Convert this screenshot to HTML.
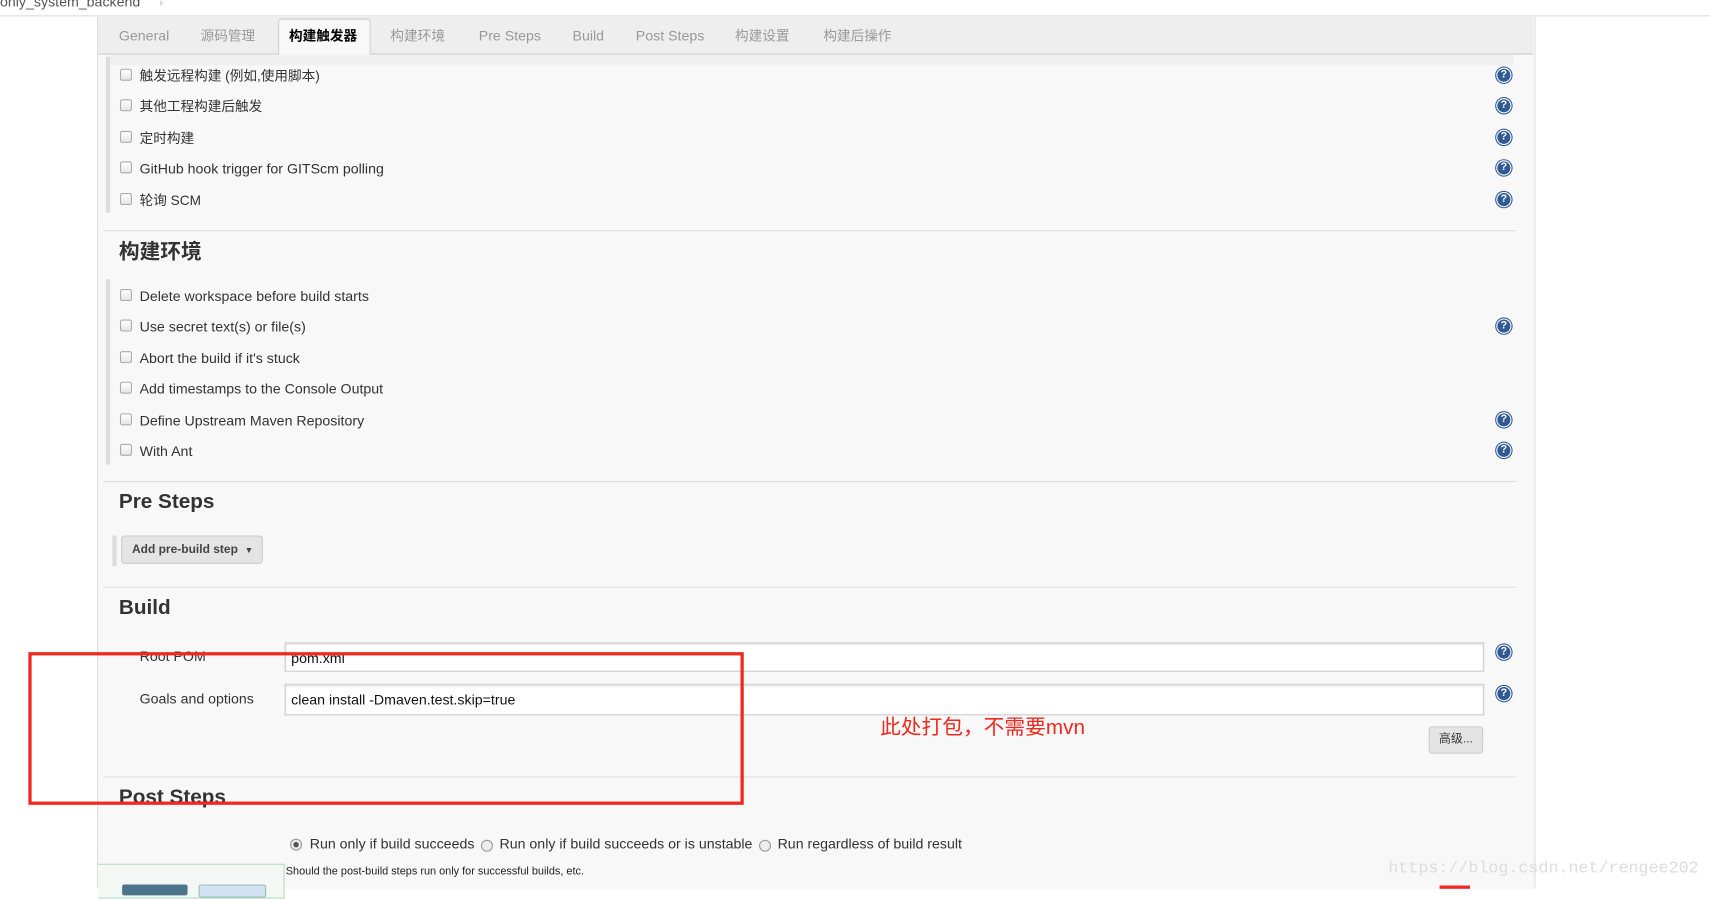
<!DOCTYPE html>
<html><head><meta charset="utf-8"><style>
html,body{margin:0;padding:0;width:1710px;height:889px;overflow:hidden;background:#fff}
#w{position:absolute;left:0;top:0;width:1568px;height:815px;transform:scale(1.09056);transform-origin:0 0;font-family:"Liberation Sans","Noto Sans CJK SC",sans-serif;color:#333}
.a{position:absolute;white-space:nowrap;line-height:16px}
.t{font-size:13px}
.cj{font-size:12.5px}
.cb{position:absolute;width:9px;height:9px;border:1px solid #aaa;border-radius:2px;background:linear-gradient(#fff,#e6e6e6)}
.h{position:absolute;width:12px;height:12px;border-radius:50%;background:#2f5a95;border:1px solid #fff;box-shadow:0 0 0 1px #2f5a95;color:#fff;font:bold 10px/12px "Liberation Sans",sans-serif;text-align:center}
.hr{position:absolute;left:95px;width:1295px;height:1px;background:#ddd}
.hd{position:absolute;font-weight:bold;font-size:19px;color:#333;line-height:22px}
.tab{position:absolute;top:25px;font-size:13px;color:#999;line-height:16px}
.tab.c{top:25px;font-size:12.5px}
.inp{position:absolute;left:261px;width:1100px;height:27px;background:#fff;border:1px solid #ccc;box-shadow:inset 0 1px 2px #ddd;font-size:13px;line-height:27px;padding-left:5px;box-sizing:border-box;color:#111}
.rd{position:absolute;width:9px;height:9px;border-radius:50%;border:1px solid #999;background:#eee}
</style></head><body><div id="w">
<div class="a t" style="left:0;top:-6px;color:#555">only_system_backend</div>
<div class="a" style="left:146px;top:-4px;color:#aaa;font-size:10px">›</div>
<div class="a" style="left:0;top:14px;width:1568px;height:1px;background:#ddd"></div>
<div class="a" style="left:89px;top:15px;width:1317px;height:800px;background:#f8f8f8;border-left:1px solid #ddd;border-right:1px solid #ddd"></div>
<div class="a" style="left:90px;top:15px;width:1316px;height:34px;background:#eee;border-bottom:1px solid #ccc"></div>
<div class="a" style="left:255px;top:17px;width:83px;height:33px;background:#f8f8f8;border:1px solid #ccc;border-bottom:none;border-radius:3px 3px 0 0"></div>
<div class="tab" style="left:109px">General</div>
<div class="tab c" style="left:184px">源码管理</div>
<div class="tab c" style="left:265px;color:#000;font-weight:bold">构建触发器</div>
<div class="tab c" style="left:358px">构建环境</div>
<div class="tab" style="left:439px">Pre Steps</div>
<div class="tab" style="left:525px">Build</div>
<div class="tab" style="left:583px">Post Steps</div>
<div class="tab c" style="left:674px">构建设置</div>
<div class="tab c" style="left:755px">构建后操作</div>
<div class="a" style="left:97px;top:52px;width:4px;height:143px;background:#ddd"></div>
<div class="a" style="left:101px;top:50px;width:1287px;height:10px;background:#f0f0f0"></div>

<div class="cb" style="left:110px;top:63px"></div><div class="a t cj" style="left:128px;top:62px">触发远程构建 (例如,使用脚本)</div><div class="h" style="left:1372px;top:62px">?</div>
<div class="cb" style="left:110px;top:91px"></div><div class="a t cj" style="left:128px;top:90px">其他工程构建后触发</div><div class="h" style="left:1372px;top:90px">?</div>
<div class="cb" style="left:110px;top:120px"></div><div class="a t cj" style="left:128px;top:119px">定时构建</div><div class="h" style="left:1372px;top:119px">?</div>
<div class="cb" style="left:110px;top:148px"></div><div class="a t" style="left:128px;top:147px">GitHub hook trigger for GITScm polling</div><div class="h" style="left:1372px;top:147px">?</div>
<div class="cb" style="left:110px;top:177px"></div><div class="a t cj" style="left:128px;top:176px">轮询 SCM</div><div class="h" style="left:1372px;top:176px">?</div>
<div class="hr" style="top:211px"></div>
<div class="hd" style="left:109px;top:221px">构建环境</div>
<div class="a" style="left:97px;top:256px;width:4px;height:170px;background:#ddd"></div>
<div class="cb" style="left:110px;top:265px"></div><div class="a t" style="left:128px;top:264px">Delete workspace before build starts</div>
<div class="cb" style="left:110px;top:293px"></div><div class="a t" style="left:128px;top:292px">Use secret text(s) or file(s)</div><div class="h" style="left:1372px;top:292px">?</div>
<div class="cb" style="left:110px;top:322px"></div><div class="a t" style="left:128px;top:321px">Abort the build if it's stuck</div>
<div class="cb" style="left:110px;top:350px"></div><div class="a t" style="left:128px;top:349px">Add timestamps to the Console Output</div>
<div class="cb" style="left:110px;top:379px"></div><div class="a t" style="left:128px;top:378px">Define Upstream Maven Repository</div><div class="h" style="left:1372px;top:378px">?</div>
<div class="cb" style="left:110px;top:407px"></div><div class="a t" style="left:128px;top:406px">With Ant</div><div class="h" style="left:1372px;top:406px">?</div>
<div class="hr" style="top:441px"></div>
<div class="hd" style="left:109px;top:450px">Pre Steps</div>
<div class="a" style="left:103px;top:491px;width:4px;height:28px;background:#ddd"></div>
<div class="a" style="left:111px;top:491px;width:130px;height:26px;background:#e4e4e4;border:1px solid #ccc;border-radius:3px;font-size:11px;font-weight:bold;color:#444;line-height:24px;padding-left:9px;box-sizing:border-box">Add pre-build step &nbsp;<span style="font-size:8px">▼</span></div>
<div class="hr" style="top:538px"></div>
<div class="hd" style="left:109px;top:547px">Build</div>
<div class="a t" style="left:128px;top:594px">Root POM</div>
<div class="inp" style="top:589px">pom.xml</div><div class="h" style="left:1372px;top:591px">?</div>
<div class="a t" style="left:128px;top:633px">Goals and options</div>
<div class="inp" style="top:627px;height:29px">clean install -Dmaven.test.skip=true</div><div class="h" style="left:1372px;top:629px">?</div>
<div class="a" style="left:1310px;top:666px;width:50px;height:25px;background:#e4e4e4;border:1px solid #ccc;border-radius:3px;box-sizing:border-box;font-size:11px;line-height:23px;text-align:center;color:#333">高级...</div>
<div class="a" style="left:807px;top:657px;font-size:19px;line-height:22px;color:#f0281e">此处打包，不需要mvn</div>
<div class="hr" style="top:712px"></div>
<div class="hd" style="left:109px;top:721px">Post Steps</div>
<div class="a" style="left:26px;top:598px;width:650px;height:134px;border:3px solid #f0281e"></div>
<div class="rd" style="left:266px;top:769px"><div style="width:5px;height:5px;border-radius:50%;background:#555;margin:2px"></div></div>
<div class="a t" style="left:284px;top:766px">Run only if build succeeds</div>
<div class="rd" style="left:441px;top:770px"></div>
<div class="a t" style="left:458px;top:766px">Run only if build succeeds or is unstable</div>
<div class="rd" style="left:696px;top:770px"></div>
<div class="a t" style="left:713px;top:766px">Run regardless of build result</div>
<div class="a" style="left:262px;top:792px;font-size:10px;color:#222">Should the post-build steps run only for successful builds, etc.</div>
<div class="a" style="left:90px;top:792px;width:170px;height:30px;background:#f4f8f4;border:1px solid #b6dbc0;border-left:none"></div>
<div class="a" style="left:112px;top:811px;width:60px;height:10px;background:#4b758b;border-radius:2px"></div>
<div class="a" style="left:182px;top:811px;width:60px;height:10px;background:#d3e2f2;border:1px solid #9bb;border-radius:2px"></div>
<div class="a" style="left:1273px;top:788px;font-family:'Liberation Mono',monospace;font-size:15.3px;color:#ddd">https://blog.csdn.net/rengee202</div>
<div class="a" style="left:1320px;top:812px;width:28px;height:3px;background:#f0281e"></div>
</div></body></html>
